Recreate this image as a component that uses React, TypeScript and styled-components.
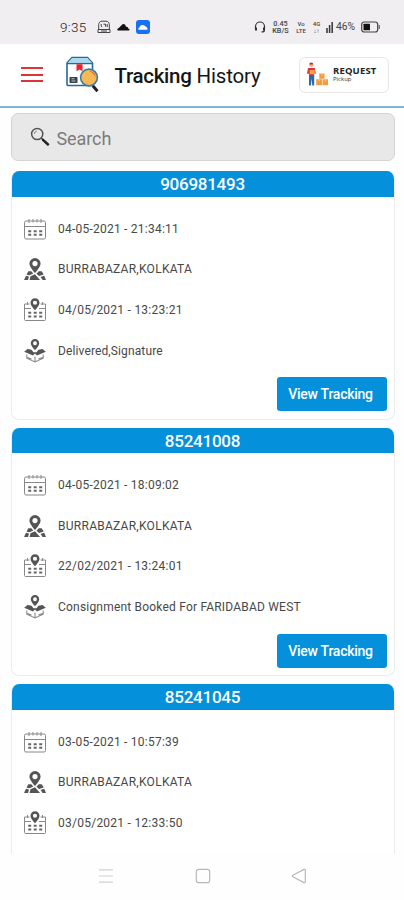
import React from "react";
import styled, { createGlobalStyle } from "styled-components";

const GlobalStyle = createGlobalStyle`
  * { box-sizing: border-box; }
  body { margin: 0; background: #fff; font-family: Roboto, "Liberation Sans", sans-serif; }
`;

const Screen = styled.div`
  width: 404px;
  height: 900px;
  display: flex;
  flex-direction: column;
  overflow: hidden;
  background: #fefefe;
`;

const StatusBar = styled.div`
  flex: none;
  height: 44px;
  padding: 9px 24px 0 60px;
  display: flex;
  align-items: center;
  justify-content: space-between;
  background: #f0eef0;
  color: #444;
`;

const StatusGroup = styled.div<{ $gap: number }>`
  display: flex;
  align-items: center;
  gap: ${(p) => p.$gap}px;
`;

const Clock = styled.span`
  width: 28px;
  margin-right: 3px;
  font: 300 13.5px/16px Roboto, sans-serif;
  letter-spacing: 0.3px;
  color: #222;
  white-space: nowrap;
`;

const TinyStack = styled.div<{ $width: number; $size: number }>`
  width: ${(p) => p.$width}px;
  display: flex;
  flex-direction: column;
  align-items: center;
  font: 500 ${(p) => p.$size}px/7px Roboto, sans-serif;
  white-space: nowrap;
`;

const BatteryLevel = styled.span`
  width: 22px;
  font: 400 10.3px/14px Roboto, sans-serif;
  white-space: nowrap;
`;

const Header = styled.header`
  flex: none;
  height: 64px;
  padding: 0 15px 0 21px;
  display: flex;
  align-items: center;
  border-bottom: 2px solid #82b2d5;
  background: #fff;
`;

const MenuIcon = styled.div`
  width: 22px;
  height: 15px;
  margin-top: -1px;
  display: flex;
  flex-direction: column;
  justify-content: space-between;
`;

const MenuLine = styled.span`
  height: 2px;
  background: #dc3438;
`;

const LogoSlot = styled.div`
  width: 36px;
  height: 38px;
  margin-left: 22px;
`;

const Title = styled.h1`
  flex: 1;
  margin: 2px 0 0 13.5px;
  font-weight: 400;
  font-size: 20.5px;
  line-height: 26px;
  letter-spacing: -0.15px;
  color: #151515;
  white-space: nowrap;
`;

const TitleStrong = styled.span`
  font-weight: 500;
  letter-spacing: -0.3px;
`;

const RequestButton = styled.button`
  width: 90px;
  height: 36px;
  margin-top: -1px;
  padding: 0 0 0 7px;
  display: flex;
  align-items: center;
  gap: 4px;
  border: 1.5px solid #e6e6e6;
  border-radius: 6px;
  background: #fff;
`;

const RequestText = styled.span`
  display: flex;
  flex-direction: column;
  align-items: flex-start;
`;

const RequestName = styled.span`
  font: 700 9.5px/10px "Open Sans", sans-serif;
  letter-spacing: 0.15px;
  color: #222;
`;

const RequestSub = styled.span`
  font: 400 6px/7px "Open Sans", sans-serif;
  color: #333;
`;

const List = styled.main`
  flex: none;
  height: 746px;
  padding: 5px 9.5px 0 10.5px;
  overflow: hidden;
`;

const SearchBox = styled.div`
  height: 48px;
  margin-bottom: 10px;
  padding-left: 18px;
  display: flex;
  align-items: center;
  gap: 7px;
  border: 1.5px solid #d4d4d4;
  border-radius: 7px;
  background: #e8e8e8;
  color: #7b7b7b;
`;

const SearchLabel = styled.span`
  margin-top: 2px;
  font-size: 18px;
  letter-spacing: -0.1px;
`;

const Card = styled.section`
  height: 248.5px;
  margin-bottom: 8px;
  border: 1px solid #ececec;
  border-top: 0;
  border-radius: 8px;
  overflow: hidden;
  background: #fff;
`;

const CardHeader = styled.h2`
  height: 25.5px;
  margin: 0 -1px;
  background: #0590dc;
  color: #fff;
  text-align: center;
  font-weight: 500;
  font-size: 17px;
  line-height: 27px;
  letter-spacing: -0.25px;
`;

const Rows = styled.div`
  height: 180.9px;
  padding: 12px 0 6.5px 11px;
`;

const Row = styled.div`
  height: 40.6px;
  display: flex;
  align-items: center;
  gap: 11.5px;
  color: #484848;
`;

const RowText = styled.span<{ $spacing: number }>`
  font-size: 12px;
  line-height: 16px;
  letter-spacing: ${(p) => p.$spacing}px;
  white-space: nowrap;
`;

const ViewButton = styled.button`
  display: block;
  width: 110px;
  height: 34px;
  margin: 0 6.5px 0 auto;
  padding: 0 3px 0 0;
  border: 0;
  border-radius: 3px;
  background: #0590dc;
  color: #fff;
  font: 500 14px/35px Roboto, sans-serif;
  letter-spacing: -0.25px;
`;

const NavBar = styled.nav`
  flex: 1;
  padding: 0 97px 2px 98px;
  display: flex;
  align-items: center;
  justify-content: space-between;
`;

const Pin = () => (
  <path
    fillRule="evenodd"
    d="M12 1a5.6 5.6 0 0 0-5.6 5.6C6.4 10.2 12 16 12 16s5.6-5.8 5.6-9.4A5.6 5.6 0 0 0 12 1Zm0 3a2.6 2.6 0 1 1 0 5.2A2.6 2.6 0 0 1 12 4Z"
  />
);

const CalendarIcon = () => (
  <svg width="24" height="24" viewBox="0 0 24 24" fill="none" stroke="#888">
    <rect x="1.5" y="4" width="21" height="18" rx="1.5" />
    <path d="M2 9.5h20" />
    <path d="M6 2v4M10 2v3.5M14 2v3.5M18 2v4" />
    <path stroke="#666" strokeWidth="2" strokeDasharray="3 2.5" d="M5.2 14.2h14M5.2 17.8h14" />
  </svg>
);

const PlaceIcon = () => (
  <svg width="24" height="24" viewBox="0 0 24 24" fill="#555">
    <Pin />
    <path d="M5.3 14.3h3l2 2.2-3.8 1.8-3-.5ZM3 18.7l3 .7-1 3.6H1ZM7.5 19.3l4.5-2 5 5.7H6.5ZM15.7 14.3h3l2 3.2-4.6 1.5-2.6-2.2ZM17.5 20l3.7-1.3L23 23h-3.3Z" />
  </svg>
);

const CalendarPinIcon = () => (
  <svg width="24" height="24" viewBox="0 0 24 24" fill="none" stroke="#888">
    <path d="M6.5 6h-5v15.6c0 .5.4.9.9.9h19.2c.5 0 .9-.4.9-.9V6h-5M2 10.5h6M16 10.5h6M4.5 4v3M19.5 4v3" />
    <g transform="translate(2.4 -.5) scale(.8)" fill="#555" stroke="none">
      <Pin />
    </g>
    <path stroke="#666" strokeWidth="2" strokeDasharray="3 2.5" d="M5.2 14.8h14M5.2 18.5h14" />
  </svg>
);

const ParcelIcon = () => (
  <svg width="24" height="24" viewBox="0 0 24 24" fill="#555">
    <g transform="translate(3 -.7) scale(.75)">
      <Pin />
    </g>
    <path d="M4.5 10 1.2 12.8 10 16.4l2-1.8 2 1.8 8.8-3.6L19.5 10l-4 .8-2 2.4h-3l-2-2.4Z" />
    <path
      d="M3.8 15.4v3.8L12 23l8.2-3.8v-3.8M12 17.5v5M4.5 18.5l4 1.5M19.5 18.5l-4 1.5"
      fill="none"
      stroke="#888"
      strokeWidth="1.1"
    />
  </svg>
);

const Logo = () => (
  <svg width="36" height="38" viewBox="0 0 36 38">
    <path d="M2 7 7 1.5h15.5L27.5 7v22.5h-24A1.5 1.5 0 0 1 2 28Z" fill="#fff" stroke="#28689b" strokeWidth="1.6" />
    <path d="M2.6 7 7 2h15.5L27 7v1H2.6Z" fill="#a9d9ee" />
    <path d="M2 7.6h25.5" stroke="#28689b" strokeWidth="1.3" />
    <path d="M11.5 8.3h6v7l-3-1.8-3 1.8Z" fill="#ee202b" />
    <rect x="4.5" y="21" width="8" height="6" rx=".7" fill="#38424c" />
    <path d="M6.5 22.8h3M6.5 25h4" stroke="#c2c8cc" />
    <path d="m27.8 29.8 4.7 5.4" stroke="#222" strokeWidth="3" />
    <circle cx="24" cy="21.5" r="8.4" fill="#f6b955" stroke="#357da8" strokeWidth="1.6" />
    <path d="M24 14.8a6.8 6.8 0 0 1 6.7 6.7c-1-2.5-3-4.6-6.7-6.7Z" fill="#f05b31" />
  </svg>
);

const CourierIcon = () => (
  <svg width="22" height="25" viewBox="0 0 22 25">
    <circle cx="4.3" cy="3" r="2" fill="#f5af75" />
    <path d="M2.3 2.6a2 2 0 0 1 4 0Z" fill="#cf242d" />
    <path d="M1 6h6.8l1 5.8H7V14H2v-2.2H0Z" fill="#df343a" />
    <path d="M2.7 8h5v4.2h-5Z" fill="#f6a14d" />
    <path d="M2 13h5.2v10.5H5.3l-.7-6.8-.7 6.8H2Z" fill="#276ba7" />
    <path d="M12.3 11.5h5.2v5.2h-5.2ZM9.2 17.3h5.8v6H9.2ZM15.6 17.3H21v6h-5.4Z" fill="#f59b3d" />
    <path d="M15 11.5v2M12 17.3v2M18.2 17.3v2" stroke="#ffd28e" />
  </svg>
);

const SearchIcon = () => (
  <svg width="20" height="20" viewBox="0 0 20 20" fill="none">
    <circle cx="7.2" cy="7" r="5.6" stroke="#555" strokeWidth="1.5" />
    <path d="m11.2 11 2.5 2.2" stroke="#444" strokeWidth="1.5" />
    <path d="m13 12.8 5 4.7" stroke="#222" strokeWidth="2.5" strokeLinecap="round" />
    <path d="M4.3 7a3 3 0 0 1 2.6-3" stroke="#888" />
  </svg>
);

const GhostIcon = () => (
  <svg width="14" height="14" viewBox="0 0 14 14" fill="none" stroke="#444">
    <path d="M1.7 9.5V4.7c0-2 1.3-3.5 3.3-3.5h4c2 0 3.3 1.5 3.3 3.5v4.8M1 9.5h12v3H1ZM4.2 4v2.2l1 .9M6.5 4.2h2v2.5M10.2 4v3M4 11h6" />
  </svg>
);

const CloudIcon = () => (
  <svg width="13" height="8" viewBox="0 0 13 8">
    <path d="M1.2 7.5C-.2 7.4 0 5.5 1.5 5.2L5 1.7c1-1 2.5-.8 3.3.4l.7 1.6c1.8-.2 2.2 1 2.2 1.7 1.7.2 1.8 1.9.6 2.1Z" fill="#111" />
  </svg>
);

const CloudAppIcon = () => (
  <svg width="14" height="14" viewBox="0 0 14 14">
    <rect width="14" height="14" rx="3" fill="#1870f4" />
    <path d="M3 9.7c-1-.2-.8-1.8.3-2C3.5 6.2 5 5 6.5 5S9 5.8 9.5 6.6c1.2 0 1.6.8 1.5 1.4 1 .4.8 1.5.2 1.7Z" fill="#fff" />
  </svg>
);

const HeadsetIcon = () => (
  <svg width="12" height="12" viewBox="0 0 12 12" fill="none" stroke="#333" strokeWidth="1.2">
    <path d="M1.5 8V5.5a4.5 4.5 0 0 1 9 0V8M10.5 9c0 1.5-1 2-3 2" />
    <path d="M2 6.5v3M10 6.5v3" strokeWidth="2" />
  </svg>
);

const SignalIcon = () => (
  <svg width="7" height="12" viewBox="0 0 7 12" stroke="#333" strokeWidth="1.5">
    <path d="M1 12V7M3.6 12V4M6.2 12V1" />
  </svg>
);

const BatteryIcon = () => (
  <svg width="19" height="12" viewBox="0 0 19 12">
    <rect x=".7" y="1" width="16" height="10" rx="2.5" fill="none" stroke="#444" strokeWidth="1.2" />
    <rect x="2.5" y="2.8" width="6.5" height="6.4" rx=".5" fill="#111" />
    <path d="M18.2 4v4" stroke="#444" />
  </svg>
);

const RecentsIcon = () => (
  <svg width="16" height="16" viewBox="0 0 16 16" stroke="#cfcfcf" strokeWidth="1.2">
    <path d="M1 1.8h14M1 8h14M1 14.2h14" />
  </svg>
);

const HomeIcon = () => (
  <svg width="16" height="16" viewBox="0 0 16 16" fill="none" stroke="#b8b8b8" strokeWidth="1.2">
    <rect x="1.3" y="1.3" width="13.4" height="13.4" rx="2.5" />
  </svg>
);

const BackIcon = () => (
  <svg width="16" height="16" viewBox="0 0 16 16" fill="none" stroke="#b8b8b8" strokeWidth="1.2">
    <path d="M13 1.4 1.8 7.2c-.6.3-.6 1.3 0 1.6L13 14.6c.7.4 1.3 0 1.3-.8V2.2c0-.8-.6-1.2-1.3-.8Z" />
  </svg>
);

interface Shipment {
  number: string;
  booked: string;
  place: string;
  updated: string;
  status?: string;
  statusSpacing?: number;
}

const shipments: Shipment[] = [
  {
    number: "906981493",
    booked: "04-05-2021 - 21:34:11",
    place: "BURRABAZAR,KOLKATA",
    updated: "04/05/2021 - 13:23:21",
    status: "Delivered,Signature",
    statusSpacing: 0.12,
  },
  {
    number: "85241008",
    booked: "04-05-2021 - 18:09:02",
    place: "BURRABAZAR,KOLKATA",
    updated: "22/02/2021 - 13:24:01",
    status: "Consignment Booked For FARIDABAD WEST",
    statusSpacing: 0.2,
  },
  {
    number: "85241045",
    booked: "03-05-2021 - 10:57:39",
    place: "BURRABAZAR,KOLKATA",
    updated: "03/05/2021 - 12:33:50",
  },
];

const ShipmentCard = ({ item }: { item: Shipment }) => (
  <Card>
    <CardHeader>{item.number}</CardHeader>
    <Rows>
      <Row>
        <CalendarIcon />
        <RowText $spacing={0.23}>{item.booked}</RowText>
      </Row>
      <Row>
        <PlaceIcon />
        <RowText $spacing={0.27}>{item.place}</RowText>
      </Row>
      <Row>
        <CalendarPinIcon />
        <RowText $spacing={0.25}>{item.updated}</RowText>
      </Row>
      {item.status && (
        <Row>
          <ParcelIcon />
          <RowText $spacing={item.statusSpacing ?? 0.1}>{item.status}</RowText>
        </Row>
      )}
    </Rows>
    {item.status && <ViewButton>View Tracking</ViewButton>}
  </Card>
);

export default function App() {
  return (
    <Screen>
      <GlobalStyle />
      <StatusBar>
        <StatusGroup $gap={6}>
          <Clock>9:35</Clock>
          <GhostIcon />
          <CloudIcon />
          <CloudAppIcon />
        </StatusGroup>
        <StatusGroup $gap={3}>
          <HeadsetIcon />
          <TinyStack $width={23} $size={7.3}>
            <span>0.45</span>
            <span>KB/S</span>
          </TinyStack>
          <TinyStack $width={12} $size={6}>
            <span>Vo</span>
            <span>LTE</span>
          </TinyStack>
          <TinyStack $width={13} $size={6}>
            <span>4G</span>
            <span>↓↑</span>
          </TinyStack>
          <SignalIcon />
          <BatteryLevel>46%</BatteryLevel>
          <BatteryIcon />
        </StatusGroup>
      </StatusBar>
      <Header>
        <MenuIcon>
          <MenuLine />
          <MenuLine />
          <MenuLine />
        </MenuIcon>
        <LogoSlot>
          <Logo />
        </LogoSlot>
        <Title>
          <TitleStrong>Tracking</TitleStrong> History
        </Title>
        <RequestButton>
          <CourierIcon />
          <RequestText>
            <RequestName>REQUEST</RequestName>
            <RequestSub>Pickup</RequestSub>
          </RequestText>
        </RequestButton>
      </Header>
      <List>
        <SearchBox>
          <SearchIcon />
          <SearchLabel>Search</SearchLabel>
        </SearchBox>
        {shipments.map((item) => (
          <ShipmentCard key={item.number} item={item} />
        ))}
      </List>
      <NavBar>
        <RecentsIcon />
        <HomeIcon />
        <BackIcon />
      </NavBar>
    </Screen>
  );
}
